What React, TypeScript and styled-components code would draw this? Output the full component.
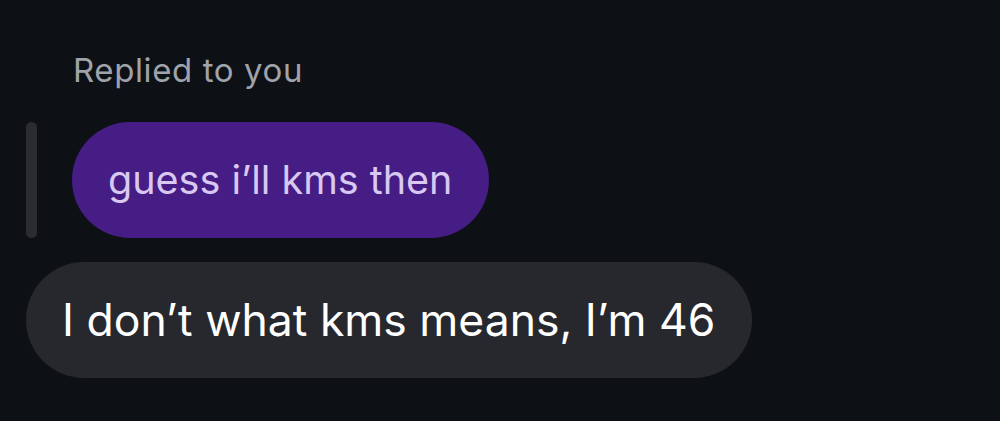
import React from 'react';
import styled, { createGlobalStyle } from 'styled-components';

const GlobalStyle = createGlobalStyle`
  html, body {
    margin: 0;
    padding: 0;
    background-color: #0d1015;
  }
  body {
    font-family: Inter, Roboto, 'Liberation Sans', sans-serif;
  }
`;

const Screen = styled.div`
  width: 1000px;
  height: 421px;
  box-sizing: border-box;
  padding: 50px 0 0 26px;
  background-color: #0d1015;
  display: flex;
  flex-direction: column;
`;

const ReplyLabel = styled.div`
  margin-left: 47px;
  font-size: 33px;
  line-height: 40px;
  letter-spacing: 0.6px;
  color: #9fa3aa;
`;

const QuoteRow = styled.div`
  display: flex;
  align-items: stretch;
  gap: 35px;
  margin-top: 32px;
`;

const QuoteBar = styled.div`
  width: 11px;
  border-radius: 6px;
  background-color: #2a2c31;
`;

const Bubble = styled.div<{ $variant: 'quoted' | 'incoming' }>`
  display: inline-flex;
  align-items: center;
  height: 116px;
  box-sizing: border-box;
  padding: 0 37px 0 36px;
  border-radius: 58px;
  background-color: ${(p) => (p.$variant === 'quoted' ? '#461d84' : '#26282d')};
  color: ${(p) => (p.$variant === 'quoted' ? '#d8c8f2' : '#ffffff')};
  font-size: ${(p) => (p.$variant === 'quoted' ? '39.5px' : '44.5px')};
  white-space: nowrap;
`;

const MessageRow = styled.div`
  display: flex;
  margin-top: 24px;
`;

const App: React.FC = () => {
  return (
    <>
      <GlobalStyle />
      <Screen>
        <ReplyLabel>Replied to you</ReplyLabel>
        <QuoteRow>
          <QuoteBar />
          <Bubble $variant="quoted">guess i’ll kms then</Bubble>
        </QuoteRow>
        <MessageRow>
          <Bubble $variant="incoming">I don’t what kms means, I’m 46</Bubble>
        </MessageRow>
      </Screen>
    </>
  );
};

export default App;
